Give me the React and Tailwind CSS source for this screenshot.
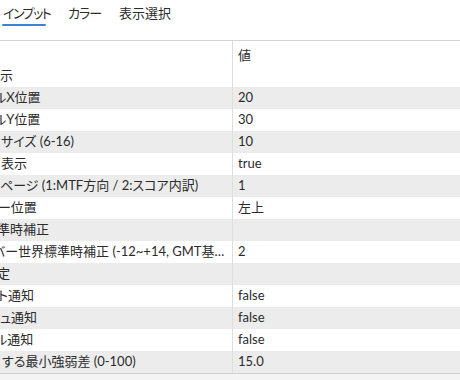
import React from "react";

const tabs = [
  { name: "インプット", w: "w-[65px]", cls: "tracking-[-1.5px]", active: true },
  { name: "カラー", w: "w-[51px]", cls: "tracking-[-1px]" },
  { name: "表示選択", w: "w-auto", cls: "" },
];

// left labels are clipped by the left edge, so each row carries its own offset
const rows = [
  { label: "表示", value: "", off: "-ml-[13px]" },
  { label: "ルX位置", value: "20", off: "-ml-[6px]" },
  { label: "ルY位置", value: "30", off: "-ml-[6px]" },
  { label: "サイズ (6-16)", value: "10", off: "ml-[1px]" },
  { label: "表示", value: "true", off: "ml-[1px]" },
  { label: "ページ (1:MTF方向 / 2:スコア内訳)", value: "1", off: "ml-0" },
  { label: "ー位置", value: "左上", off: "-ml-[2px]" },
  { label: "準時補正", value: "", off: "-ml-[3px]" },
  { label: "バー世界標準時補正 (-12~+14, GMT基準)", value: "2", off: "-ml-[7px]" },
  { label: "定", value: "", off: "-ml-[3px]" },
  { label: "ト通知", value: "false", off: "-ml-[2px]" },
  { label: "ュ通知", value: "false", off: "ml-0" },
  { label: "ル通知", value: "false", off: "-ml-[5px]" },
  { label: "する最小強弱差 (0-100)", value: "15.0", off: "ml-[2px]" },
];

export default function App() {
  return (
    <div className="w-[460px] h-[380px] overflow-hidden bg-[#f4f4f4] text-[#2b2b2b] font-['Lato','Noto_Sans_CJK_JP',sans-serif] [font-feature-settings:'palt']">
      {/* tabs */}
      <div className="h-[41px] bg-white border-b border-[#d4d4d4] flex pl-[3px]">
        {tabs.map((t) => (
          <div key={t.name} className={`${t.w} relative`}>
            <div className={`text-[13px] leading-[16px] pt-[5px] whitespace-nowrap ${t.cls}`}>{t.name}</div>
            {t.active && (
              <div className="absolute left-[-1px] top-[24px] w-[44px] h-[2px] bg-[#3b82d6] rounded-full" />
            )}
          </div>
        ))}
      </div>

      {/* table */}
      <div className="bg-white border-b border-[#d0d0d0] text-[13px]">
        <div className="flex h-[24px]">
          <div className="w-[233px] border-r border-[#dedede]" />
          <div className="flex-1 pl-[5px] pt-[6px] leading-[16px]">値</div>
        </div>
        {rows.map((r, i) => (
          <div
            key={i}
            className={`flex h-[22px] items-center ${i % 2 === 1 ? "bg-[#ececec]" : "bg-white"}`}
          >
            <div className="w-[233px] h-full flex items-center overflow-hidden pr-[3px] border-r border-[#dedede]">
              <span className={`block ${r.off} overflow-hidden text-ellipsis whitespace-nowrap`}>
                {r.label}
              </span>
            </div>
            <div className="flex-1 pl-[5px] whitespace-nowrap">{r.value}</div>
          </div>
        ))}
      </div>
    </div>
  );
}
